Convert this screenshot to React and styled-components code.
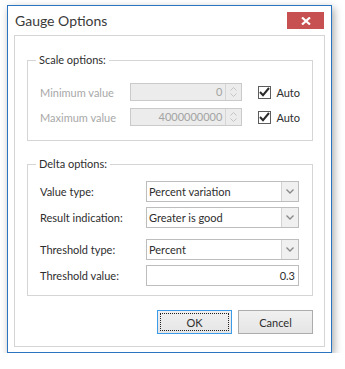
import React from "react";
import styled, { createGlobalStyle } from "styled-components";

const Global = createGlobalStyle`
  html, body { margin: 0; padding: 0; background: #ffffff; }
  body { font-family: Lato, "Open Sans", sans-serif; }
`;

const Window = styled.div`
  box-sizing: border-box;
  width: 325px;
  height: 348px;
  margin: 5px 0 0 7px;
  border: 1px solid #2b74c0;
  background: #ffffff;
  display: flex;
  flex-direction: column;
  box-shadow: 2px 3px 8px rgba(0, 0, 0, 0.35);
`;

const TitleBar = styled.div`
  height: 29px;
  flex: none;
  display: flex;
  align-items: flex-start;
  justify-content: space-between;
  padding: 0 7px 0 7px;
`;

const Title = styled.div`
  font-family: Lato, "Open Sans", sans-serif;
  font-size: 14px;
  color: #3a3a3a;
  margin-top: 6px;
`;

const CloseButton = styled.button`
  width: 37px;
  height: 17px;
  margin-top: 6px;
  border: none;
  padding: 0;
  background: #c75050;
  display: flex;
  align-items: center;
  justify-content: center;
`;

const Panel = styled.div`
  flex: 1;
  margin: 0 6px 5px 6px;
  border: 1px solid #d5d5d5;
  background: #ffffff;
  display: flex;
  flex-direction: column;
  padding: 17px 11px 11px 12px;
  font-family: Lato, "Open Sans", sans-serif;
  font-size: 11px;
  color: #2e2e2e;
`;

const Group = styled.fieldset`
  margin: ${(p) => p.$mt || 0}px 0 0 0;
  min-width: 0;
  border: 1px solid #d5d5d5;
  padding: ${(p) => p.$pad};
  display: flex;
  flex-direction: column;
`;

const Legend = styled.legend`
  margin-left: -4px;
  padding: 0 3px;
  color: #2e2e2e;
  line-height: 14px;
`;

const Row = styled.div`
  display: flex;
  align-items: center;
  height: ${(p) => p.$h}px;
  margin-top: ${(p) => p.$mt || 0}px;
`;

const Label = styled.div`
  width: ${(p) => p.$w}px;
  flex: none;
  color: ${(p) => (p.$disabled ? "#a8a8a8" : "#2e2e2e")};
`;

const SpinBox = styled.div`
  box-sizing: border-box;
  width: 115px;
  height: 18px;
  border: 1px solid #cacaca;
  background: #ececec;
  display: flex;
`;

const SpinValue = styled.div`
  flex: 1;
  text-align: right;
  color: #a3a3a3;
  line-height: 16px;
  padding-right: 3px;
`;

const SpinButtons = styled.div`
  width: 15px;
  border-left: 1px solid #d6d6d6;
  display: flex;
  flex-direction: column;
  align-items: center;
  justify-content: center;
  gap: 2px;
`;

const Check = styled.div`
  display: flex;
  align-items: center;
  margin-left: 16px;
  color: #2e2e2e;
`;

const CheckBox = styled.div`
  box-sizing: border-box;
  width: 13px;
  height: 13px;
  border: 1px solid #5c5c5c;
  background: #ffffff;
  display: flex;
  align-items: center;
  justify-content: center;
  margin-right: 5px;
`;

const Field = styled.div`
  box-sizing: border-box;
  width: 153px;
  height: 21px;
  border: 1px solid #bdbdbd;
  background: #ffffff;
  display: flex;
  align-items: stretch;
`;

const FieldText = styled.div`
  flex: 1;
  line-height: 19px;
  padding: 0 3px 0 2px;
  text-align: ${(p) => (p.$right ? "right" : "left")};
  color: #2e2e2e;
`;

const DropButton = styled.div`
  width: 16px;
  border-left: 1px solid #d3d3d3;
  background: #f0f0f0;
  display: flex;
  align-items: center;
  justify-content: center;
`;

const Buttons = styled.div`
  display: flex;
  justify-content: flex-end;
  gap: 6px;
  margin-top: 14px;
`;

const Button = styled.button`
  box-sizing: border-box;
  width: 75px;
  height: 24px;
  border: 1px solid ${(p) => (p.$focus ? "#3c9be8" : "#acacac")};
  background: linear-gradient(#f0f0f0, #e5e5e5);
  font-family: Lato, "Open Sans", sans-serif;
  font-size: 11px;
  color: #2e2e2e;
  padding: 0;
  display: flex;
  align-items: center;
  justify-content: center;
  position: relative;
`;

const FocusRect = styled.span`
  position: absolute;
  inset: 2px;
  border: 1px dotted #222;
`;

const Chevron = ({ up }) => (
  <svg width="7" height="4" viewBox="0 0 7 4">
    <path
      d={up ? "M0.5 3.5 L3.5 0.5 L6.5 3.5" : "M0.5 0.5 L3.5 3.5 L6.5 0.5"}
      fill="none"
      stroke="#c4c4c4"
      strokeWidth="1"
    />
  </svg>
);

const DropArrow = () => (
  <svg width="8" height="5" viewBox="0 0 8 5">
    <path d="M0.5 0.5 L4 4 L7.5 0.5" fill="none" stroke="#8a8a8a" strokeWidth="1.4" />
  </svg>
);

const Tick = () => (
  <svg width="11" height="10" viewBox="0 0 11 10">
    <path d="M1 5 L4 8.2 L10 1" fill="none" stroke="#2b2b2b" strokeWidth="2" />
  </svg>
);

const ScaleRow = ({ label, value, mt }) => (
  <Row $h={18} $mt={mt}>
    <Label $w={90} $disabled>
      {label}
    </Label>
    <SpinBox>
      <SpinValue>{value}</SpinValue>
      <SpinButtons>
        <Chevron up />
        <Chevron />
      </SpinButtons>
    </SpinBox>
    <Check>
      <CheckBox>
        <Tick />
      </CheckBox>
      Auto
    </Check>
  </Row>
);

const Combo = ({ value }) => (
  <Field>
    <FieldText>{value}</FieldText>
    <DropButton>
      <DropArrow />
    </DropButton>
  </Field>
);

const DeltaRow = ({ label, children, mt }) => (
  <Row $h={21} $mt={mt}>
    <Label $w={106}>{label}</Label>
    {children}
  </Row>
);

export default function App() {
  return (
    <>
      <Global />
      <Window>
        <TitleBar>
          <Title>Gauge Options</Title>
          <CloseButton aria-label="Close">
            <svg width="10" height="8" viewBox="0 0 10 8">
              <path d="M1 0.5 L9 7.5 M9 0.5 L1 7.5" stroke="#ffffff" strokeWidth="2.2" />
            </svg>
          </CloseButton>
        </TitleBar>
        <Panel>
          <Group $pad="16px 12px 14px 12px">
            <Legend>Scale options:</Legend>
            <ScaleRow label="Minimum value" value="0" />
            <ScaleRow label="Maximum value" value="4000000000" mt={7} />
          </Group>
          <Group $pad="10px 12px 9px 12px" $mt={16}>
            <Legend>Delta options:</Legend>
            <DeltaRow label="Value type:">
              <Combo value="Percent variation" />
            </DeltaRow>
            <DeltaRow label="Result indication:" mt={5}>
              <Combo value="Greater is good" />
            </DeltaRow>
            <DeltaRow label="Threshold type:" mt={11}>
              <Combo value="Percent" />
            </DeltaRow>
            <DeltaRow label="Threshold value:" mt={5}>
              <Field>
                <FieldText $right>0.3</FieldText>
              </Field>
            </DeltaRow>
          </Group>
          <Buttons>
            <Button $focus>
              <FocusRect />
              OK
            </Button>
            <Button>Cancel</Button>
          </Buttons>
        </Panel>
      </Window>
    </>
  );
}
